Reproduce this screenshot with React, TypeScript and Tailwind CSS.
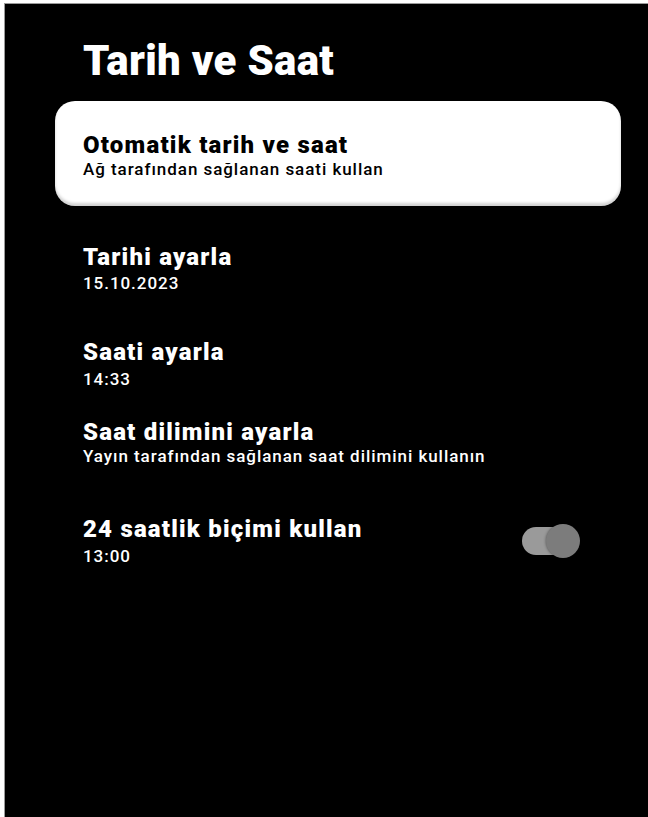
const rows = [
  { title: 'Tarihi ayarla', sub: '15.10.2023', mt: 'mt-[37px]', subMt: 'mt-[2px]' },
  { title: 'Saati ayarla', sub: '14:33', mt: 'mt-[45px]', subMt: 'mt-[3px]' },
  { title: 'Saat dilimini ayarla', sub: 'Yayın tarafından sağlanan saat dilimini kullanın', mt: 'mt-[29px]', subMt: 'mt-0' },
]

function Toggle() {
  return (
    <div className="relative h-[34px] w-[58px] shrink-0">
      <div className="absolute left-0 top-[3px] h-[28px] w-[47px] rounded-full bg-[#9a9a9a]" />
      <div className="absolute right-0 top-0 h-[34px] w-[34px] rounded-full bg-[#7c7c7c] shadow-[0_0_3px_rgba(0,0,0,0.5)]" />
    </div>
  )
}

export default function App() {
  return (
    <div
      className="h-[817px] w-[648px] overflow-hidden bg-white pl-[4px] pt-[3px]"
      style={{ fontFamily: 'Roboto, "Noto Sans", sans-serif' }}
    >
      <div className="h-full border-l border-t border-[#9a9a9a] bg-black text-white">
        <h1 className="pl-[78px] pt-[36px] text-[42px] font-black leading-[42px] tracking-[0.3px]">Tarih ve Saat</h1>

        <div className="ml-[50px] mt-[19px] h-[105px] w-[566px] rounded-[20px] bg-white pl-[28px] pt-[33px] text-black shadow-[inset_0_-3px_3px_rgba(0,0,0,0.18)]">
          <div className="text-[24px] font-black leading-[22px] tracking-[1.2px]">Otomatik tarih ve saat</div>
          <div className="mt-[4px] text-[17px] font-medium leading-[18px] tracking-[0.95px]">Ağ tarafından sağlanan saati kullan</div>
        </div>

        <div className="pl-[78px]">
          {rows.map((r) => (
            <div key={r.title} className={r.mt}>
              <div className="text-[24px] font-black leading-[28px] tracking-[1.2px]">{r.title}</div>
              <div className={`${r.subMt} text-[17px] font-medium leading-[20px] tracking-[0.95px]`}>{r.sub}</div>
            </div>
          ))}

          <div className="mt-[49px] flex w-[497px] items-center justify-between">
            <div>
              <div className="text-[24px] font-black leading-[28px] tracking-[1.2px]">24 saatlik biçimi kullan</div>
              <div className="mt-[3px] text-[17px] font-medium leading-[20px] tracking-[0.95px]">13:00</div>
            </div>
            <Toggle />
          </div>
        </div>
      </div>
    </div>
  )
}
